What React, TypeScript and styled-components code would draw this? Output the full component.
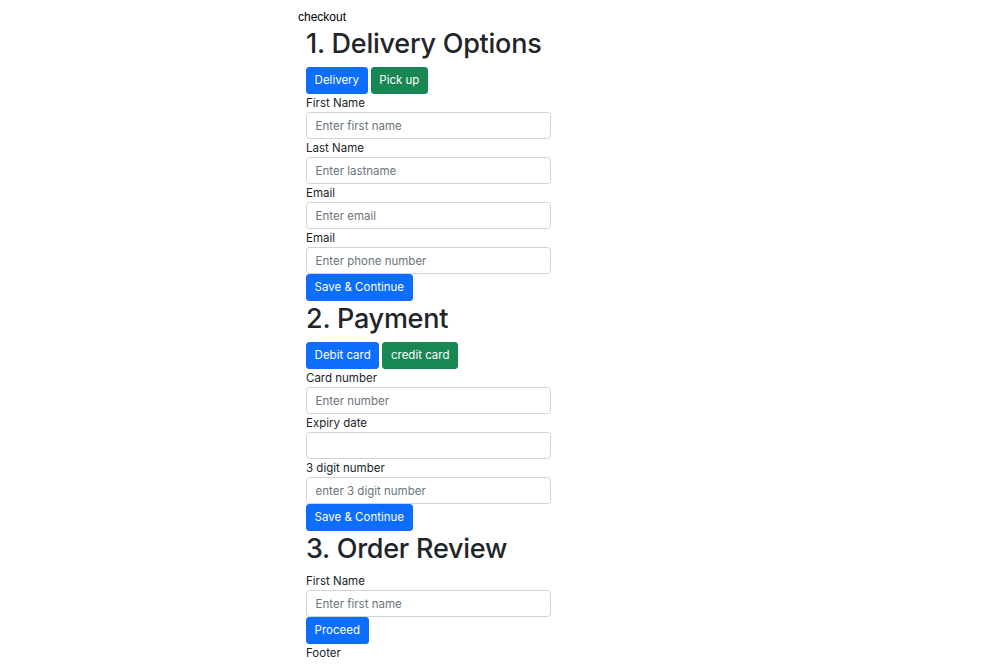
import React from "react";
import styled, { createGlobalStyle } from "styled-components";

const Global = createGlobalStyle`
  html, body { margin: 0; padding: 0; background: #fff; }
  body {
    font-family: Inter, "Noto Sans", "Liberation Sans", sans-serif;
    color: #212529;
    font-size: 11.5px;
    line-height: 1.5;
  }
  * { box-sizing: border-box; }
`;

const Page = styled.div`
  padding: 8px 0 0 298px;
`;

const Brand = styled.div`
  font-family: "Liberation Sans", Arial, sans-serif;
  font-size: 12px;
  line-height: 18px;
  color: #000;
`;

const Container = styled.main`
  width: 245px;
  margin-left: 8px;
  display: flex;
  flex-direction: column;
`;

const Heading = styled.h1`
  font-size: 27px;
  font-weight: 500;
  line-height: 34px;
  padding-top: 1px;
  margin: 0 0 6px;
  letter-spacing: -0.25px;
  white-space: nowrap;
`;

const ButtonRow = styled.div`
  display: flex;
  gap: 3px;
`;

const Button = styled.button<{ $variant?: "primary" | "success" }>`
  font-family: inherit;
  font-size: 11.5px;
  line-height: 1;
  height: 27px;
  padding: 0 7.6px;
  border: 1px solid ${(p) => (p.$variant === "success" ? "#198754" : "#0d6efd")};
  background: ${(p) => (p.$variant === "success" ? "#198754" : "#0d6efd")};
  color: #fff;
  border-radius: 3px;
  cursor: pointer;
  align-self: flex-start;
`;

const Label = styled.label`
  display: block;
  line-height: 18px;
  height: 18px;
`;

const Input = styled.input`
  display: block;
  width: 245px;
  height: 27px;
  padding: 0 8.6px;
  font-family: inherit;
  font-size: 11.5px;
  color: #212529;
  border: 1px solid #ced4da;
  border-radius: 3.5px;
  background: #fff;
  outline: none;
  &::placeholder { color: #6c757d; }
`;

const Footer = styled.footer`
  line-height: 18px;
`;

function Field({ label, placeholder }: { label: string; placeholder: string }) {
  return (
    <div>
      <Label>{label}</Label>
      <Input placeholder={placeholder} />
    </div>
  );
}

export default function App() {
  return (
    <>
      <Global />
      <Page>
        <Brand>checkout</Brand>
        <Container>
          <Heading>1. Delivery Options</Heading>
          <ButtonRow>
            <Button $variant="primary">Delivery</Button>
            <Button $variant="success">Pick up</Button>
          </ButtonRow>
          <Field label="First Name" placeholder="Enter first name" />
          <Field label="Last Name" placeholder="Enter lastname" />
          <Field label="Email" placeholder="Enter email" />
          <Field label="Email" placeholder="Enter phone number" />
          <Button $variant="primary">Save &amp; Continue</Button>

          <Heading as="h2">2. Payment</Heading>
          <ButtonRow>
            <Button $variant="primary">Debit card</Button>
            <Button $variant="success">credit card</Button>
          </ButtonRow>
          <Field label="Card number" placeholder="Enter number" />
          <Field label="Expiry date" placeholder="" />
          <Field label="3 digit number" placeholder="enter 3 digit number" />
          <Button $variant="primary">Save &amp; Continue</Button>

          <Heading as="h2">3. Order Review</Heading>
          <Field label="First Name" placeholder="Enter first name" />
          <Button $variant="primary">Proceed</Button>
          <Footer>Footer</Footer>
        </Container>
      </Page>
    </>
  );
}
